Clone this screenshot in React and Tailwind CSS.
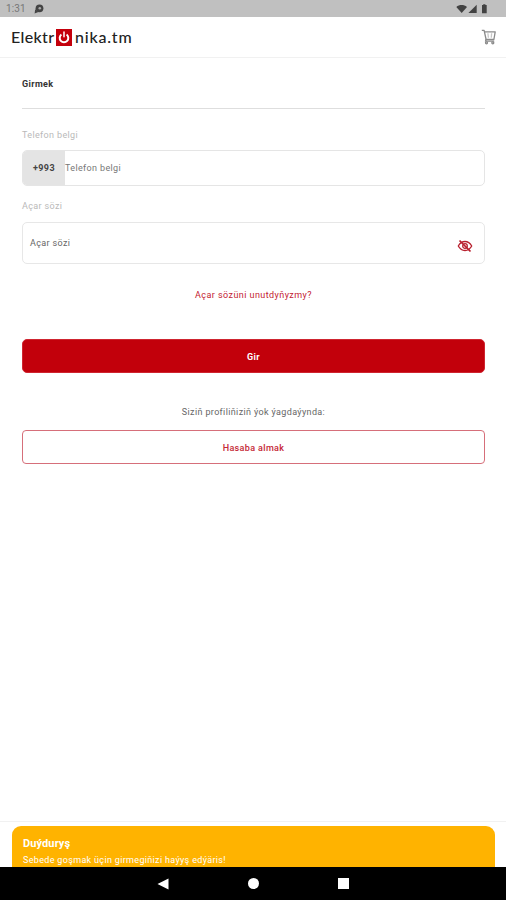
function PowerLogo() {
  return (
    <svg viewBox="0 0 16 17" className="h-[17px] w-4 shrink-0" aria-hidden="true">
      <rect width="16" height="17" fill="#c4000c" />
      <path
        d="M5.4 5.5A4.3 4.3 0 1 0 10.6 5.5"
        fill="none"
        stroke="#fff"
        strokeWidth="2"
      />
      <path d="M8 3v4.8" stroke="#fff" strokeWidth="1.5" strokeLinecap="round" />
    </svg>
  )
}

function CartIcon() {
  return (
    <svg
      viewBox="0 0 16 16"
      className="h-4 w-4"
      fill="none"
      stroke="#8a8a8a"
      strokeWidth="1.3"
      strokeLinejoin="round"
      aria-hidden="true"
    >
      <path d="M.8 1.3h2.3l2 9.2h7.800l1.300-7.700H3.5" />
      <path d="M6.900 4.300l.5 4.500M10.600 4.300l-.3 4.500" stroke="#c6c6c6" />
      <path d="M5.1 10.3l-.6 1.8h8.700" />
      <circle cx="5.5" cy="13.8" r="1" />
      <circle cx="11.8" cy="13.8" r="1" />
    </svg>
  )
}

function EyeOffIcon() {
  return (
    <svg
      viewBox="0 0 16 14"
      className="h-3.5 w-4"
      fill="none"
      stroke="#b8202e"
      strokeWidth="1.3"
      aria-hidden="true"
    >
      <path d="M1.3 7C3 3.9 5.3 2.5 8 2.5S13 3.9 14.7 7C13 10.1 10.7 11.5 8 11.5S3 10.1 1.3 7Z" />
      <circle cx="8" cy="7" r="2.3" />
      <path d="M2.5 1.5l11 11" strokeWidth="1.7" />
    </svg>
  )
}

function StatusBar() {
  return (
    <div className="flex h-[17px] shrink-0 items-center bg-[#c0c0c0] pl-[6px] pr-[17px]">
      <span className="mt-px w-[28px] text-[10px] leading-none tracking-[0.1px] text-[#777]">1:31</span>
      <svg viewBox="0 0 10 10" className="h-2.5 w-2.5" aria-hidden="true">
        <circle cx="5.5" cy="4.3" r="3.9" fill="#444" />
        <path d="M.6 9.4l.6-4.2 3.2 2.9Z" fill="#444" />
        <circle cx="5.8" cy="4.2" r="1.3" fill="#aaa" />
      </svg>
      <svg viewBox="0 0 33 10" className="ml-auto h-2.5 w-[33px]" fill="#424242" aria-hidden="true">
        <path d="M.3 3C3.4.4 7.8.4 11 3L5.7 9Z" />
        <path d="M20.7.7V9h-8.3Z" />
        <path d="M26 1h1.200V.2h2.200V1h1.300v8.300H26Z" />
      </svg>
    </div>
  )
}

function Header() {
  return (
    <header className="flex h-[41px] shrink-0 items-center justify-between border-b border-[#f1f1f1] pl-[11px] pr-[9px]">
      <div className="flex items-center font-['Lato',sans-serif] text-[16px] font-medium leading-none text-[#222]">
        <span className="w-[45px] whitespace-nowrap tracking-[0.35px]">Elektr</span>
        <PowerLogo />
        <span className="ml-[3px] whitespace-nowrap tracking-[0.8px]">nika.tm</span>
      </div>
      <button type="button" aria-label="Sebet">
        <CartIcon />
      </button>
    </header>
  )
}

function LoginForm() {
  return (
    <main className="flex flex-1 flex-col pl-[22px] pr-[21px] text-[9px] leading-3 tracking-[0.36px]">
      <h1 className="mt-5 font-bold text-[#333]">Girmek</h1>
      <div className="mt-[18px] h-px bg-[#dedede]" />

      <label className="mt-5 text-[#b9b9b9]">Telefon belgi</label>
      <div className="mt-[9px] flex h-9 overflow-hidden rounded-[5px] border border-[#e5e5e5]">
        <span className="flex w-[42px] items-center justify-center bg-[#e4e4e4] font-bold text-[#444]">
          +993
        </span>
        <span className="flex items-center text-[#777]">Telefon belgi</span>
      </div>

      <label className="mt-[14px] text-[#b9b9b9]">Açar sözi</label>
      <div className="mt-[10px] flex h-[42px] items-center justify-between rounded-[5px] border border-[#e7e7e7] pl-[7px] pr-[11px]">
        <span className="text-[#666]">Açar sözi</span>
        <span className="mt-[5px]">
          <EyeOffIcon />
        </span>
      </div>

      <a className="mt-[25px] text-center tracking-[0.43px] text-[#c32030]">Açar sözüni unutdyňyzmy?</a>

      <button
        type="button"
        className="mt-[38px] h-[34px] rounded-[5px] border border-[#cf2530] bg-[#c2000b] pt-0.5 font-bold text-white"
      >
        Gir
      </button>

      <p className="mt-[33px] text-center text-[#666]">Siziň profiliňiziň ýok ýagdaýynda:</p>
      <button
        type="button"
        className="mt-3 h-[34px] rounded-[4px] border border-[#d66f7a] pt-0.5 font-medium text-[#c52836]"
      >
        Hasaba almak
      </button>
    </main>
  )
}

function Notice() {
  return (
    <div className="h-[46px] shrink-0 overflow-hidden border-t border-[#f1f1f1] pl-[12px] pr-[11px] pt-1">
      <div className="h-[52px] rounded-[9px] bg-[#ffb300] pl-[11px] pt-[11px] text-white">
        <p className="text-[11px] font-bold leading-[14px] tracking-[0.1px]">Duýduryş</p>
        <p className="mt-[3px] text-[9px] leading-3 tracking-[0.33px]">
          Sebede goşmak üçin girmegiňizi haýyş edýäris!
        </p>
      </div>
    </div>
  )
}

function NavigationBar() {
  return (
    <nav className="flex h-[33px] shrink-0 items-center justify-center gap-[79px] bg-black">
      <svg viewBox="0 0 12 12" className="h-3 w-3" aria-hidden="true">
        <path d="M11.5.5v11L.5 6Z" fill="#fff" />
      </svg>
      <span className="h-[11px] w-[11px] rounded-full bg-white" />
      <span className="h-[11px] w-[11px] bg-white" />
    </nav>
  )
}

export default function App() {
  return (
    <div className="flex h-screen w-full flex-col overflow-hidden bg-white font-['Roboto',sans-serif]">
      <StatusBar />
      <Header />
      <LoginForm />
      <Notice />
      <NavigationBar />
    </div>
  )
}
